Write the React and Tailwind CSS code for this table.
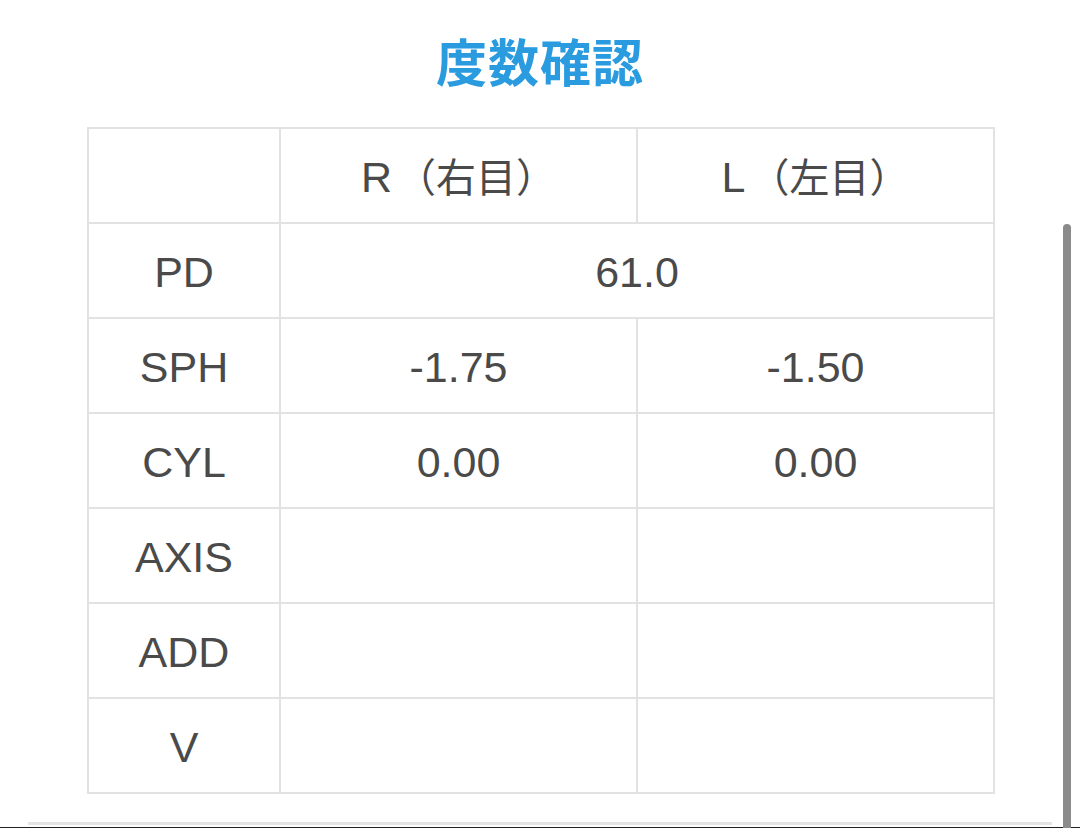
import React from 'react';

const rows = [
  { label: 'PD', pd: '61.0' },
  { label: 'SPH', r: '-1.75', l: '-1.50' },
  { label: 'CYL', r: '0.00', l: '0.00' },
  { label: 'AXIS', r: '', l: '' },
  { label: 'ADD', r: '', l: '' },
  { label: 'V', r: '', l: '' },
];

const cell = 'border-2 border-[#e2e2e2] text-center align-middle h-[95px] p-0 pt-[4px]';

export default function App() {
  return (
    <div className="relative w-[1080px] h-[828px] bg-white overflow-hidden text-[#4a4a4a] font-['Liberation_Sans','Noto_Sans_CJK_JP',sans-serif]">
      <h1 className="pt-[28px] h-[127px] text-center text-[51px] leading-[64px] font-bold text-[#2b9be0] font-['Noto_Sans_CJK_JP',sans-serif] tracking-[1px]">
        度数確認
      </h1>
      <table className="ml-[87px] w-[906px] border-collapse table-fixed text-[43px] leading-none">
        <colgroup>
          <col className="w-[192px]" />
          <col className="w-[357px]" />
          <col className="w-[357px]" />
        </colgroup>
        <tbody>
          <tr>
            <td className={cell}></td>
            <td className={cell}>
              R<span className="pl-[4px] text-[40px]">（右目）</span>
            </td>
            <td className={cell}>
              L<span className="pl-[4px] text-[40px]">（左目）</span>
            </td>
          </tr>
          {rows.map((row) => (
            <tr key={row.label}>
              <td className={cell}>{row.label}</td>
              {row.pd ? (
                <td className={cell} colSpan={2}>{row.pd}</td>
              ) : (
                <>
                  <td className={cell}>{row.r}</td>
                  <td className={cell}>{row.l}</td>
                </>
              )}
            </tr>
          ))}
        </tbody>
      </table>
      <div className="mt-[28px] ml-[28px] w-[1024px] h-[3px] bg-[#e4e4e4]" />
      <div className="mt-[2px] h-[1px] bg-[#222]" />
      {/* scrollbar overlay */}
      <div className="absolute right-[9px] top-[224px] w-[8px] h-[610px] rounded-full bg-[#8a8a8a]" />
    </div>
  );
}
